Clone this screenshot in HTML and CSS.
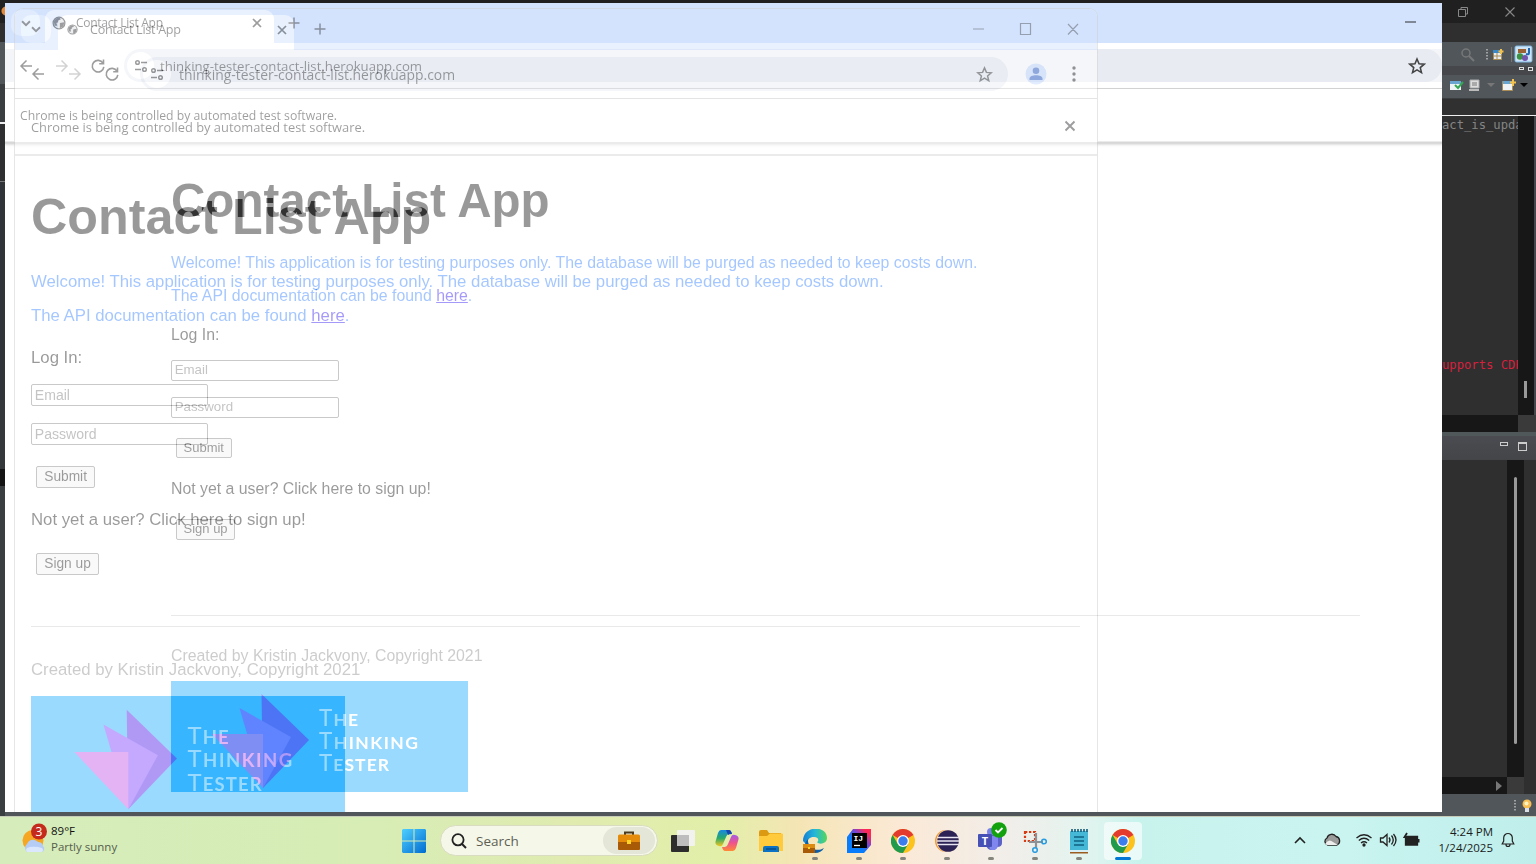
FILE: index.html
```html
<!DOCTYPE html>
<html lang="en">
<head>
<meta charset="utf-8">
<title>Contact List App</title>
<link rel="stylesheet" href="styles.css">
</head>
<body>
<svg width="0" height="0" class="defs">
  <symbol id="chev" viewBox="0 0 16 16"><path d="M3.500 6L8 10.500 12.500 6" fill="none" stroke="currentColor" stroke-width="2.100"/></symbol>
  <symbol id="globe" viewBox="0 0 16 16"><circle cx="8" cy="8" r="6.7" fill="#cfd4da" stroke="currentColor" stroke-width="1.5"/><path d="M2 6c3-4 4-4 7-4l1 2-3 1v2l-2 1 1 3H3zM9 8l5-1-1 5-4 2v-3z" fill="currentColor"/></symbol>
  <symbol id="cross" viewBox="0 0 16 16"><path d="M4 4l8 8M12 4l-8 8" stroke="currentColor" stroke-width="1.7"/></symbol>
  <symbol id="plus" viewBox="0 0 16 16"><path d="M8 2.500v11M2.500 8h11" stroke="currentColor" stroke-width="1.5"/></symbol>
  <symbol id="back" viewBox="0 0 16 16"><path d="M14 8H3M8.500 2.500L3 8l5.500 5.500" fill="none" stroke="currentColor" stroke-width="1.5"/></symbol>
  <symbol id="fwd" viewBox="0 0 16 16"><path d="M2 8h11M7.500 2.500L13 8l-5.500 5.500" fill="none" stroke="currentColor" stroke-width="1.5"/></symbol>
  <symbol id="reload" viewBox="0 0 16 16"><path d="M13 5.200A5.800 5.800 0 1 0 13.800 8.800M13.500 1.500v4.300H9.200" fill="none" stroke="currentColor" stroke-width="1.600"/></symbol>
  <symbol id="tune" viewBox="0 0 16 16"><g fill="none" stroke="currentColor" stroke-width="1.500"><circle cx="4.500" cy="4.500" r="1.800"/><circle cx="11.500" cy="11.500" r="1.800"/><path d="M8 4.500h6M2 11.500h6"/></g></symbol>
  <symbol id="star" viewBox="0 0 16 16"><path d="M8 1.800l1.800 4.200 4.600.4-3.500 3 1.100 4.500L8 11.500l-4 2.400 1.100-4.500-3.500-3 4.600-.4z" fill="none" stroke="currentColor" stroke-width="1.400"/></symbol>
  <symbol id="logo" viewBox="0 0 297 111"><path d="M0 0h297v111H0z" fill="#03a2ff"/><path d="M90.500 13L138 59l-46 48z" fill="#3800e6"/><path d="M68.500 27L120 56l-28 51z" fill="#6b26ff"/><path d="M41 53h51v54z" fill="#b940e0"/>
    <g class="logo-text" fill="#fff"><text x="148" y="45" textLength="39">T<tspan>HE</tspan></text><text x="148" y="67.500" textLength="99">T<tspan>HINKING</tspan></text><text x="148" y="89.500" textLength="70">T<tspan>ESTER</tspan></text></g></symbol>
  <symbol id="chrome" viewBox="0 0 24 24"><circle cx="12" cy="12" r="12" fill="#fcc31e"/><path d="M12 12L1.600 6A12 12 0 0 1 22.400 6z" fill="#e33b2e"/><path d="M1.600 6l5.200 9L12 18l0 6A12 12 0 0 1 1.600 6z" fill="#209a4c"/><path d="M12 24l5.200-9-5.200 2z" fill="#209a4c"/><circle cx="12" cy="12" r="6" fill="#fff"/><circle cx="12" cy="12" r="4.700" fill="#3b7ded"/></symbol>
</svg>

<div class="desktop">
  <div class="ide">
    <div class="ide-left"><i class="l1"></i><i class="l2"></i><i class="l3"></i><i class="l4"></i><i class="l5"></i><i class="l6"></i></div>
    <div class="ide-right">
      <div class="ide-title">
        <svg width="12" height="12" viewBox="0 0 12 12"><path d="M1.500 3.500h7v7h-7zM4 3V1.500h6.500V8H9" fill="none" stroke="#888"/></svg>
        <svg width="12" height="12" viewBox="0 0 12 12"><path d="M1.500 1.500l9 9M10.500 1.500l-9 9" stroke="#888" stroke-width="1.100"/></svg>
      </div>
      <div class="ide-menu"></div>
      <div class="ide-tools">
        <svg width="94" height="24" viewBox="1442 42 94 24"><circle cx="1466" cy="53" r="4" fill="none" stroke="#777" stroke-width="1.500"/><path d="M1469 56l5 5" stroke="#777" stroke-width="2"/><path d="M1487 49v12" stroke="#bbb" stroke-width="1.500" stroke-dasharray="1.500 1.500"/><path d="M1493.500 50.500h8v9h-8z" fill="#e6edf5" stroke="#a98d55"/><path d="M1493 50h9v3h-9z" fill="#3b86c4"/><path d="M1494 56h8M1497 53v7" stroke="#a98d55"/><path d="M1501 49v5M1498.500 51.500h5" stroke="#f2c14e" stroke-width="2"/><path d="M1511.500 47v15" stroke="#777"/><rect x="1515" y="46" width="17" height="16" rx="1.500" fill="#cde4f7" stroke="#7db4e0"/><path d="M1518 49h8v4h-8z" fill="#9a6234"/><path d="M1529 48v5q0 2-3 1" fill="none" stroke="#2366b0" stroke-width="2"/><circle cx="1520" cy="56.500" r="3.200" fill="#3c9144"/><circle cx="1525" cy="58" r="3" fill="#7254ad"/></svg>
      </div>
      <div class="ide-tabbar"><i></i><i></i></div>
      <div class="ide-tools2">
        <svg width="94" height="23" viewBox="1442 75 94 23"><path d="M1450 81h11v9h-11z" fill="#eef3f6"/><path d="M1450 81h11v3h-11z" fill="#6aa5d0"/><path d="M1455 85l3 3 5-6" stroke="#34a853" stroke-width="2" fill="none"/><path d="M1470 80h9v8h-9z" fill="#ddd" stroke="#aaa"/><path d="M1472 83h5M1472 85h5" stroke="#777"/><path d="M1469 90h10" stroke="#bbb" stroke-width="2"/><path d="M1487 83h8l-4 4z" fill="#777"/><path d="M1502.500 81.500h10v9h-10z" fill="#eef3f6" stroke="#a98d55"/><path d="M1503 81h9v3h-9z" fill="#6aa5d0"/><path d="M1513 79v7M1510 82.500h6" stroke="#f2c14e" stroke-width="2"/><path d="M1520 83h8l-4 4z" fill="#000"/></svg>
      </div>
      <div class="ide-gap"></div>
      <div class="editor"><div class="code"><span class="c1">act_is_upda</span><span class="c2">upports CDP</span></div><div class="vbar"><i></i></div></div>
      <div class="hbar"><i></i></div>
      <div class="panel-head"><i class="mn"></i><i class="mx"></i></div>
      <div class="console"><div class="cbar"><i></i></div></div>
      <div class="hbar2"><svg width="8" height="10" viewBox="0 0 8 10"><path d="M1 0l6 5-6 5z" fill="#777"/></svg></div>
      <div class="ide-status"><svg width="22" height="16" viewBox="0 0 22 16"><path d="M3 2v12" stroke="#bbb" stroke-width="1.500" stroke-dasharray="1.500 1.500"/><circle cx="15" cy="6" r="4.500" fill="#f8c054"/><circle cx="14.500" cy="5.500" r="2" fill="#fff3c4"/><path d="M13 10h4v4h-4z" fill="#d9dde8"/></svg></div>
    </div>
  </div>

  <div class="ghosts">
    <div class="layer">
      <section class="win win-a">
        <div class="strip"><span class="dd"><svg><use href="#chev"/></svg></span><div class="tab"><svg class="gl"><use href="#globe"/></svg><span class="tt">Contact List App</span><svg class="x"><use href="#cross"/></svg></div><svg class="pl"><use href="#plus"/></svg></div>
        <div class="bar"><svg><use href="#back"/></svg><svg class="dim"><use href="#fwd"/></svg><svg><use href="#reload"/></svg><div class="omni"><span class="site"><svg><use href="#tune"/></svg></span><span class="url">thinking-tester-contact-list.herokuapp.com</span></div></div>
        <div class="info"><span>Chrome is being controlled by automated test software.</span></div>
        <main class="page">
          <h1>Contact List App</h1>
          <p class="blue">Welcome! This application is for testing purposes only. The database will be purged as needed to keep costs down.</p>
          <p class="blue">The API documentation can be found&nbsp;<a>here</a>.</p>
          <p class="login">Log In:</p>
          <div class="row email"><span class="input">Email</span></div>
          <div class="row pass"><span class="input">Password</span></div>
          <div class="row btn"><span class="button">Submit</span></div>
          <p class="btn">Not yet a user? Click here to sign up!</p>
          <div class="row btn"><span class="button">Sign up</span></div>
          <hr>
          <p class="foot">Created by Kristin Jackvony, Copyright 2021</p>
          <svg class="logo"><use href="#logo"/></svg>
        </main>
      </section>
    </div>
    <div class="layer surround">
      <section class="win win-b">
        <div class="strip"><span class="dd"><svg><use href="#chev"/></svg></span><div class="tab"><svg class="gl"><use href="#globe"/></svg><span class="tt">Contact List App</span><svg class="x"><use href="#cross"/></svg></div><svg class="pl"><use href="#plus"/></svg>
          <svg class="ctl" viewBox="0 0 108 14"><path d="M1 7h11M48.500 1.500h10v11h-10zM96 2l10 10.500M106 2L96 12.500" fill="none" stroke="currentColor" stroke-width="1.200"/></svg></div>
        <div class="bar"><svg><use href="#back"/></svg><svg class="dim"><use href="#fwd"/></svg><svg><use href="#reload"/></svg><div class="omni"><span class="site"><svg><use href="#tune"/></svg></span><span class="url">thinking-tester-contact-list.herokuapp.com</span><svg class="st"><use href="#star"/></svg></div>
          <svg class="av" viewBox="0 0 22 22"><circle cx="11" cy="11" r="10.500" fill="#b4d0fb"/><circle cx="11" cy="7.800" r="3.300" fill="#0038b8"/><path d="M4.500 17v-1.500c0-4.500 13-4.500 13 0V17z" fill="#0038b8"/></svg>
          <svg class="dots" viewBox="0 0 4 16"><circle cx="2" cy="2" r="1.700"/><circle cx="2" cy="8" r="1.700"/><circle cx="2" cy="14" r="1.700"/></svg></div>
        <div class="info"><span>Chrome is being controlled by automated test software.</span><svg><use href="#cross"/></svg></div>
        <main class="page">
          <h1>Contact List App</h1>
          <p class="blue">Welcome! This application is for testing purposes only. The database will be purged as needed to keep costs down.</p>
          <p class="blue">The API documentation can be found&nbsp;<a>here</a>.</p>
          <p class="login">Log In:</p>
          <div class="row email"><span class="input">Email</span></div>
          <div class="row pass"><span class="input">Password</span></div>
          <div class="row btn"><span class="button">Submit</span></div>
          <p class="btn">Not yet a user? Click here to sign up!</p>
          <div class="row btn"><span class="button">Sign up</span></div>
          <hr>
          <p class="foot">Created by Kristin Jackvony, Copyright 2021</p>
          <svg class="logo"><use href="#logo"/></svg>
        </main>
      </section>
    </div>
    <div class="edge"><i></i><svg><use href="#star"/></svg></div>
  </div>

  <footer class="taskbar">
    <div class="weather">
      <svg width="28" height="32" viewBox="0 0 28 32"><circle cx="12" cy="17.500" r="10.500" fill="#f5a623"/><path d="M6 29a5 5 0 0 1 0-8 6.500 6.500 0 0 1 11-2 5 5 0 0 1 5 4 3.500 3.500 0 0 1-1 6z" fill="#b5cdf5"/><path d="M6 29q-3-4 3-5t12 1q2 2 0 4z" fill="#dbe7fc"/><circle cx="18" cy="8.500" r="8" fill="#c42b1c"/><text x="18" y="12.800" fill="#fff" font-size="12" text-anchor="middle">3</text></svg>
      <div><b>89°F</b><span>Partly sunny</span></div>
    </div>
    <div class="apps">
      <span class="app"><svg width="24" height="24" viewBox="0 0 24 24"><defs><linearGradient id="w" x2="1" y2="1"><stop stop-color="#4fd0ff"/><stop offset="1" stop-color="#006bd0"/></linearGradient></defs><path d="M1 0h10.500v11.500H0V1zM12.500 0H23l1 1v10.500H12.500zM0 12.500h11.500V24H1l-1-1zM12.500 12.500H24V23l-1 1H12.500z" fill="url(#w)"/></svg></span>
      <div class="search"><svg width="16" height="16" viewBox="0 0 16 16"><circle cx="7" cy="6.800" r="5.600" fill="none" stroke="#222" stroke-width="1.800"/><path d="M11 11l4 4" stroke="#222" stroke-width="2"/></svg><span>Search</span><i><svg width="24" height="20" viewBox="0 0 24 20"><path d="M8 4V1.500h8V4" fill="none" stroke="#4a3a20" stroke-width="2"/><rect x="1" y="3.500" width="22" height="15.500" rx="1.500" fill="#e58b0b"/><path d="M1 11h22v6.500q0 1.500-1.500 1.500h-19Q1 19 1 17.500z" fill="#a85a06"/><path d="M10 9h4v4h-4z" fill="#ffd426"/></svg></i></div>
      <span class="app"><svg width="24" height="22" viewBox="0 0 24 22"><rect y="5" width="18" height="17" rx="1" fill="#2d2d2d"/><rect x="6" width="18" height="16" rx="1" fill="#f2f2f2" opacity=".95"/><path d="M6 5h12v11H6z" fill="#bdbdbd"/></svg></span>
      <span class="app"><svg width="24" height="21" viewBox="0 0 24 21"><defs><linearGradient id="ca" x2="0" y2="1"><stop stop-color="#1788e0"/><stop offset=".5" stop-color="#27a96b"/><stop offset="1" stop-color="#f4c51f"/></linearGradient><linearGradient id="cb" x2="0" y2="1"><stop stop-color="#a35ce8"/><stop offset=".5" stop-color="#ef528d"/><stop offset="1" stop-color="#ff8a35"/></linearGradient></defs><path d="M6 0h8q2 0 3 4h-3q-2 0-3 3l-3 7q-1 3-4 2-5-1-3-6l2-7Q4 0 6 0z" fill="url(#ca)"/><path d="M18 21h-8q-2 0-3-4h3q2 0 3-3l3-7q1-3 4-2 5 1 3 6l-2 7q-1 3-3 3z" fill="url(#cb)"/><path d="M11 0h3q2 0 3 4-3 0-4 1z" fill="#1645b0"/></svg></span>
      <span class="app"><svg width="24" height="22" viewBox="0 0 24 22"><path d="M0 2q0-2 2-2h6l2 3h12v5H0z" fill="#dc9a12"/><path d="M0 6h8l3-2.500h12q1 0 1 1V21H0z" fill="#ffcb3d"/><path d="M4 22v-4q0-2 2-2h12q2 0 2 2v4z" fill="#0b72c4"/><path d="M7 19h10" stroke="#05457c" stroke-width="1.200"/></svg></span>
      <span class="app run"><svg width="24" height="24" viewBox="0 0 24 24"><defs><linearGradient id="e" x2="1"><stop stop-color="#147fd4"/><stop offset=".5" stop-color="#25b8d8"/><stop offset="1" stop-color="#55d65b"/></linearGradient></defs><path d="M0 12C0-4 24-4 24 9c0 6-8 7-10 4 2-1 2-5-3-5-6 0-7 4-6 9z" fill="url(#e)"/><path d="M5 10c-1 8 8 14 16 9-3 6-11 6-15 3-5-4-5-8-1-12z" fill="#0c5ea8"/><path d="M0 15h12v9H0z" fill="#dd8a10"/><path d="M0 19h12v5H0z" fill="#a85a06"/><path d="M5 18h2v2H5z" fill="#ffd426"/></svg></span>
      <span class="app run"><svg width="24" height="24" viewBox="0 0 24 24"><defs><linearGradient id="ij" x1="0" y1="1" x2="1" y2="0"><stop offset=".4" stop-color="#087cfa"/><stop offset=".6" stop-color="#7048d8"/><stop offset=".85" stop-color="#fe2857"/></linearGradient></defs><path d="M6 0h18v16l-7 8H0V8z" fill="url(#ij)"/><path d="M5 4h15v15H5z"/><path d="M7 16.500h6" stroke="#fff" stroke-width="1.300"/><text x="6.500" y="12" fill="#fff" class="ij">IJ</text></svg></span>
      <span class="app run"><svg width="24" height="24"><use href="#chrome"/></svg></span>
      <span class="app run"><svg width="24" height="24" viewBox="0 0 24 24"><circle cx="11" cy="12" r="11" fill="#f39a2b"/><circle cx="12.500" cy="12" r="11" fill="#f9e6d0"/><circle cx="13" cy="12" r="10.800" fill="#2c2255"/><path d="M2 8.500h22M2 12h22M2 15.500h22" stroke="#e8e4f2" stroke-width="1.500"/></svg></span>
      <span class="app run teams"><svg width="30" height="30" viewBox="0 0 30 30"><circle cx="14" cy="10" r="4" fill="#7b83eb"/><path d="M9 13h12v10q-1 5-6 5t-6-5zM20 13h5v8q0 4-5 4z" fill="#5b62c8"/><path d="M13 14h8v8q0 6-5 6t-3-5z" fill="#7f86ee"/><rect x="1" y="12" width="14" height="13" rx="1" fill="#4750b5"/><text x="8" y="22.500" fill="#fff" font-size="11" font-weight="bold" text-anchor="middle">T</text><circle cx="22" cy="8" r="7.800" fill="#13a10e"/><path d="M18.500 8l2.500 2.500 4.500-4.500" fill="none" stroke="#fff" stroke-width="1.800"/></svg></span>
      <span class="app run"><svg width="24" height="24" viewBox="0 0 24 24"><path d="M2 3h10v9H2z" fill="none" stroke="#d83b12" stroke-width="2.200" stroke-dasharray="2.300 1.700"/><path d="M13 4v15M6 13h14" stroke="#8d9298" stroke-width="2.200"/><circle cx="12" cy="21" r="2.300" fill="none" stroke="#2a9de0" stroke-width="1.600"/><circle cx="21" cy="12.500" r="2.300" fill="none" stroke="#2a9de0" stroke-width="1.600"/></svg></span>
      <span class="app run"><svg width="20" height="26" viewBox="0 0 20 26"><rect x="1" y="3" width="18" height="21" rx="1" fill="#45b8d8"/><path d="M3 1v3M6 1v3M9 1v3M12 1v3M15 1v3M18 1v3" stroke="#155a78" stroke-width="1.600"/><path d="M5 9h10M5 13h10M5 17h10" stroke="#0f6180" stroke-width="1.400"/><path d="M1 22h18v3H1z" fill="#d8f0f5"/><path d="M1 24h18v1.500H1z" fill="#9b5c20"/></svg></span>
      <span class="app run active"><svg width="24" height="24"><use href="#chrome"/></svg></span>
    </div>
    <div class="tray">
      <svg width="130" height="24" viewBox="1294 828 130 24"><g fill="none" stroke="#222" stroke-width="1.300"><path d="M1296 843l5-5 5 5" stroke-width="1.600"/><path d="M1328.500 845a3.800 3.800 0 0 1-.5-7 5 5 0 0 1 9-1.500 4.500 4.500 0 0 1 1 8.500z" fill="#9b9b9b"/><path d="M1326 844q4-6 8-2l5 3h-10q-2 0-3-1z" fill="#eee" stroke="none"/><path d="M1357.500 838q7.500-6.500 15 0M1359.800 840.500q5.200-4.500 10.400 0M1362 843q3-2.500 6 0"/><circle cx="1365" cy="845" r="1" fill="#222"/><path d="M1381.500 838h2.500l4-3.500v11l-4-3.500h-2.500zM1390 837.500q2 2.500 0 5M1392.500 835.500q3.500 4.500 0 9M1394.500 834q5 6 0 12"/><path d="M1406.500 836.500h12v8.500h-12z" fill="#222"/><path d="M1419.500 839v3.500" stroke-width="2"/><path d="M1408 833l-2.500 4h3l-1.500 3.500" stroke-width="1.800"/></g></svg>
      <div class="clock"><span>4:24 PM</span><span>1/24/2025</span></div>
      <svg width="14" height="16" viewBox="0 0 14 16"><path d="M7 1.500a4.300 4.300 0 0 1 4.300 4.300V9l1.500 3H1.200l1.500-3V5.800A4.300 4.300 0 0 1 7 1.500zM5 12.500q0 2 2 2t2-2" fill="none" stroke="#222" stroke-width="1.200"/></svg>
    </div>
  </footer>
</div>
</body>
</html>
```
FILE: styles.css
```css
* { box-sizing: border-box; }
body { margin: 0; overflow: hidden; font-family: "Open Sans", "Noto Sans", sans-serif; }
svg { flex: none; display: block; }
.defs { position: absolute; }
.desktop { position: relative; width: 1536px; height: 864px; display: flex; flex-direction: column; overflow: hidden; background: #222; }

/* IDE behind the browser windows */
.ide { height: 816px; display: flex; justify-content: space-between; background: linear-gradient(#202020 0 400px, #50565a 400px); }
.ide-left { width: 5px; display: flex; flex-direction: column; background: #3b3e41; }
.ide-left i { width: 5px; }
.l1 { height: 23px; background: radial-gradient(circle at 6px 11px, #e28a3c 4px, #202020 5px); }
.l2 { height: 19px; background: #2f2f2f; }
.l3 { height: 82px; background: linear-gradient(#50565a 0 42px, #3b3e41 42px 80px, #eee 80px); }
.l4 { height: 276px; background: linear-gradient(#2d2f31 0 57px, #777 57px 58px, #303438 58px); }
.l5 { height: 69px; background: #34383b; }
.l6 { height: 17px; background: #141414; }
.ide-right { width: 94px; display: flex; flex-direction: column; background: #2f2f2f; }
.ide-title { height: 23px; background: #202020; display: flex; justify-content: space-between; align-items: center; padding: 0 20px 0 15px; }
.ide-menu { height: 19px; background: #2f2f2f; }
.ide-tools { height: 24px; background: #50565a; }
.ide-tabbar { height: 9px; background: #45474a; display: flex; justify-content: flex-end; gap: 4px; padding: 1px 3px 0 0; }
.ide-tabbar i { width: 5px; height: 4px; border: 1px solid #ddd; }
.ide-tabbar i:first-child { height: 3px; }
.ide-tools2 { height: 23px; background: #50565a; }
.ide-gap { height: 18px; background: #303030; border-bottom: 1px solid #eee; border-top: 1px solid #3b3e41; }
.editor { height: 299px; display: flex; border-right: 2px solid #45474a; }
.code { width: 76px; overflow: hidden; display: flex; flex-direction: column; gap: 223px; padding-top: 1px; font: 12.200px/17px "DejaVu Sans Mono", monospace; white-space: nowrap; }
.c1 { color: #858585; }
.c2 { color: #d6203e; }
.vbar { width: 16px; background: #171717; padding: 265px 0 0 6px; }
.vbar i { display: block; width: 3px; height: 17px; background: #999; }
.hbar { height: 17px; background: #171717; display: flex; justify-content: flex-end; }
.hbar i { width: 18px; background: #3a3a3a; }
.panel-head { height: 28px; border-top: 4px solid #50585a; background: linear-gradient(#4a4c51, #434548); display: flex; justify-content: flex-end; gap: 10px; padding: 6px 9px 0 0; }
.mn { width: 8px; height: 4px; border: 1px solid #ccc; }
.mx { width: 9px; height: 9px; border: 1px solid #ccc; border-top-width: 2px; }
.console { height: 317px; display: flex; justify-content: flex-end; padding-right: 12px; }
.cbar { width: 17px; background: #171717; padding: 17px 0 0 7px; }
.cbar i { display: block; width: 3px; height: 267px; background: #999; border-radius: 2px; }
.hbar2 { height: 17px; background: linear-gradient(90deg, #171717 65px, #3a3a3a 65px 82px, #2f2f2f 82px); padding: 4px 0 0 53px; }
.ide-status { height: 22px; background: #50565a; padding: 4px 0 0 70px; }

/* two half-faded windows whose light adds up */
.ghosts { position: absolute; left: 5px; top: 3px; width: 1437px; height: 809px; background: #333; overflow: hidden; isolation: isolate; }
.layer { position: absolute; inset: 0; opacity: .4; mix-blend-mode: plus-lighter; background: #fff; }
.surround { background: linear-gradient(#c8dbfc 0 40px, #fff 40px 46px, #e0e5ee 46px 79px, #fff 79px 85px, #d0d0d0 85px 86px, #fff 86px 138px, #ccc 138px 140px, #fff 143px); }
.win { position: absolute; background: #fff; overflow: hidden; color: #08090c; }
.win-a { left: 0; top: 0; width: 1437px; height: 809px; }
.win-b { left: 9px; top: 5px; width: 1084px; height: 804px; border: 1px solid #c0c0c0; border-bottom: 0; border-radius: 9px 9px 0 0; }
.strip { display: flex; align-items: flex-start; background: #c8dbfc; }
.dd { display: flex; align-items: center; justify-content: center; background: #e9f1fe; border-radius: 10px; }
.dd svg { width: 14px; height: 14px; }
.tab { display: flex; align-items: center; background: #fff; border-radius: 9px 9px 0 0; }
.tt { white-space: nowrap; flex: none; }
.tab .x { margin-left: auto; }
.x, .pl { width: 16px; height: 16px; }
.bar { display: flex; align-items: center; background: #fff; border-bottom: 1px solid #bbb; }
.bar .dim { opacity: .45; }
.omni { display: flex; align-items: center; background: #e2e7f0; }
.site { background: #fff; border-radius: 50%; display: flex; align-items: center; justify-content: center; }
.url { white-space: nowrap; }
.info { display: flex; align-items: center; justify-content: space-between; white-space: nowrap; }

.win-a .strip { height: 40px; padding: 7px 0 0 6px; }
.win-a .dd { width: 29px; height: 26px; }
.win-a .tab { width: 229px; height: 33px; margin-left: 5px; padding: 0 9px 8px 7px; }
.win-a .gl { width: 14px; height: 14px; margin-right: 10px; }
.win-a .tt { font-size: 12px; letter-spacing: -.260px; }
.win-a .pl { margin: 5px 0 0 12px; }
.win-a .bar { height: 46px; padding-left: 13px; gap: 20px; }
.win-a .bar > svg { width: 16px; height: 16px; }
.win-a .omni { flex: 1; height: 33px; border-radius: 17px; margin-left: -2px; padding-left: 3px; gap: 6px; }
.win-a .site { width: 27px; height: 27px; }
.win-a .site svg { width: 16px; height: 16px; }
.win-a .url { font-size: 13.200px; }
.win-a .info { height: 55px; border-bottom: 2px solid #ccc; padding-left: 15px; font-size: 12.230px; box-shadow: 0 1px 3px #ccc; }

.win-b .strip { height: 41px; padding: 6px 0 0 6px; }
.win-b .dd { width: 30px; height: 28px; }
.win-b .tab { width: 236px; height: 35px; margin-left: 7px; padding: 0 4px 6px 9px; }
.win-b .gl { width: 11px; height: 11px; margin-right: 12px; }
.win-b .tt { font-size: 12.600px; letter-spacing: -.300px; }
.win-b .pl { margin: 6px 0 0 18px; }
.win-b .ctl { width: 108px; height: 14px; margin: 7px 17px 0 auto; opacity: .8; }
.win-b .bar { height: 49px; padding-left: 15px; gap: 21px; }
.win-b .bar > svg { width: 16px; height: 16px; }
.win-b .omni { width: 868px; height: 34px; border-radius: 17px; margin-left: -1px; padding: 0 15px 0 3px; gap: 8px; flex: none; }
.win-b .site { width: 28px; height: 28px; }
.win-b .site svg { width: 16px; height: 16px; }
.win-b .url { font-size: 13.900px; }
.win-b .st { width: 17px; height: 17px; margin-left: auto; }
.win-b .bar .av { width: 22px; height: 22px; margin-left: -4px; }
.win-b .bar .dots { width: 4px; height: 16px; margin-left: 4px; }
.win-b .info { height: 57px; border-bottom: 2px solid #ccc; padding: 1px 18px 0 16px; font-size: 12.880px; }
.win-b .info svg { width: 18px; height: 18px; margin-top: -2px; }

/* page content, every measure in em so the zoomed copies share it */
.page { display: flex; flex-direction: column; font-family: "Liberation Sans", Arial, sans-serif; color: #000; }
.win-a .page { font-size: 15.850px; padding: 27.200px 82px 0 166px; }
.win-b .page { font-size: 16.760px; padding: 28.500px 17px 0 16px; }
.page h1 { font-size: 3em; height: 1.260em; line-height: 1.260em; margin: 0 0 .340em; white-space: nowrap; flex: none; }
.page p, .row { height: 2.060em; line-height: 2.060em; margin: 0; display: flex; align-items: center; white-space: nowrap; flex: none; }
.page .blue { color: #1e73ff; }
.page a { color: #1a00ee; text-decoration: underline; }
.page .login { margin-top: .400em; }
.page .email { margin-top: .170em; }
.page .pass { margin-top: .250em; }
.page .btn { margin-top: .520em; }
.input { font-size: .840em; width: 12.600em; height: 1.570em; border: 1px solid #767676; border-radius: 2px; color: #6a6a6a; padding-left: .200em; display: flex; align-items: center; }
.button { font-size: .820em; height: 1.610em; line-height: 1.450em; border: 1px solid #767676; border-radius: 2px; background: #efefef; padding: 0 .520em; margin-left: .370em; }
.page hr { width: 100%; border: 0; border-top: 1px solid #c8c8c8; margin: 0 0 1.540em; flex: none; }
.win-a hr { margin-top: 69px; }
.win-b hr { margin-top: 45px; }
.page .foot { color: #808080; }
.logo { width: 18.740em; height: 7.010em; margin-top: .520em; }
.logo-text { font: 400 22.500px Lato, sans-serif; }
.logo-text tspan { font-size: 17.500px; font-weight: 700; }
.edge { position: absolute; right: 14px; top: 18px; display: flex; flex-direction: column; align-items: center; gap: 34px; color: #444; }
.edge i { width: 11px; height: 2px; background: #7f8897; margin-right: 12px; }
.edge svg { width: 18px; height: 18px; }

/* taskbar */
.taskbar { height: 48px; display: flex; align-items: center; background: linear-gradient(90deg, #d6ecbb 0, #d7edb5 370px, #dfebb0 560px, #e2efa9 720px, #f5e5b5 800px, #fbe9d6 900px, #f1eeea 1010px, #e3f4ef 1085px, #c8f3ed 1140px, #c9f4f0 1350px, #bfeeeb); border-top: 1px solid #c6ccb8; }
.weather { width: 392px; display: flex; padding: 0 0 3px 21px; gap: 2px; align-items: center; font-size: 11.500px; line-height: 16px; }
.weather div { display: flex; flex-direction: column; }
.weather b { font-weight: 400; color: #111; }
.weather span { color: #555e4c; }
.apps { display: flex; align-items: center; width: 756px; flex: none; }
.app { width: 44px; height: 46px; display: flex; align-items: center; justify-content: center; position: relative; flex: none; }
.run::after { content: ""; position: absolute; bottom: 4px; width: 6px; height: 3px; border-radius: 2px; background: #85857d; }
.active { width: 38px; height: 38px; margin: 0 3px; background: rgba(255,255,255,.6); border-radius: 4px; }
.active::after { width: 16px; background: #0078d4; bottom: 0; }
.teams svg { margin: -8px 0 0 2px; }
.ij { font: bold 8px "Liberation Mono", monospace; }
.search { width: 218px; height: 31px; margin: 0 3px 0 4px; border-radius: 16px; background: #f5f7e8; border: 1px solid #d9dcc0; display: flex; align-items: center; padding: 0 2px 0 10px; font-size: 13.500px; color: #5d5f55; }
.search span { margin-left: 9px; }
.search i { margin-left: auto; width: 52px; height: 27px; border-radius: 14px; background: #e4e6d7; display: flex; align-items: center; justify-content: center; }
.tray { margin-left: auto; display: flex; align-items: center; gap: 8px; padding: 0 21px 2px 0; }
.clock { width: 62px; display: flex; flex-direction: column; align-items: flex-end; font-size: 11.500px; line-height: 16px; color: #1b1b1b; white-space: nowrap; }
```
